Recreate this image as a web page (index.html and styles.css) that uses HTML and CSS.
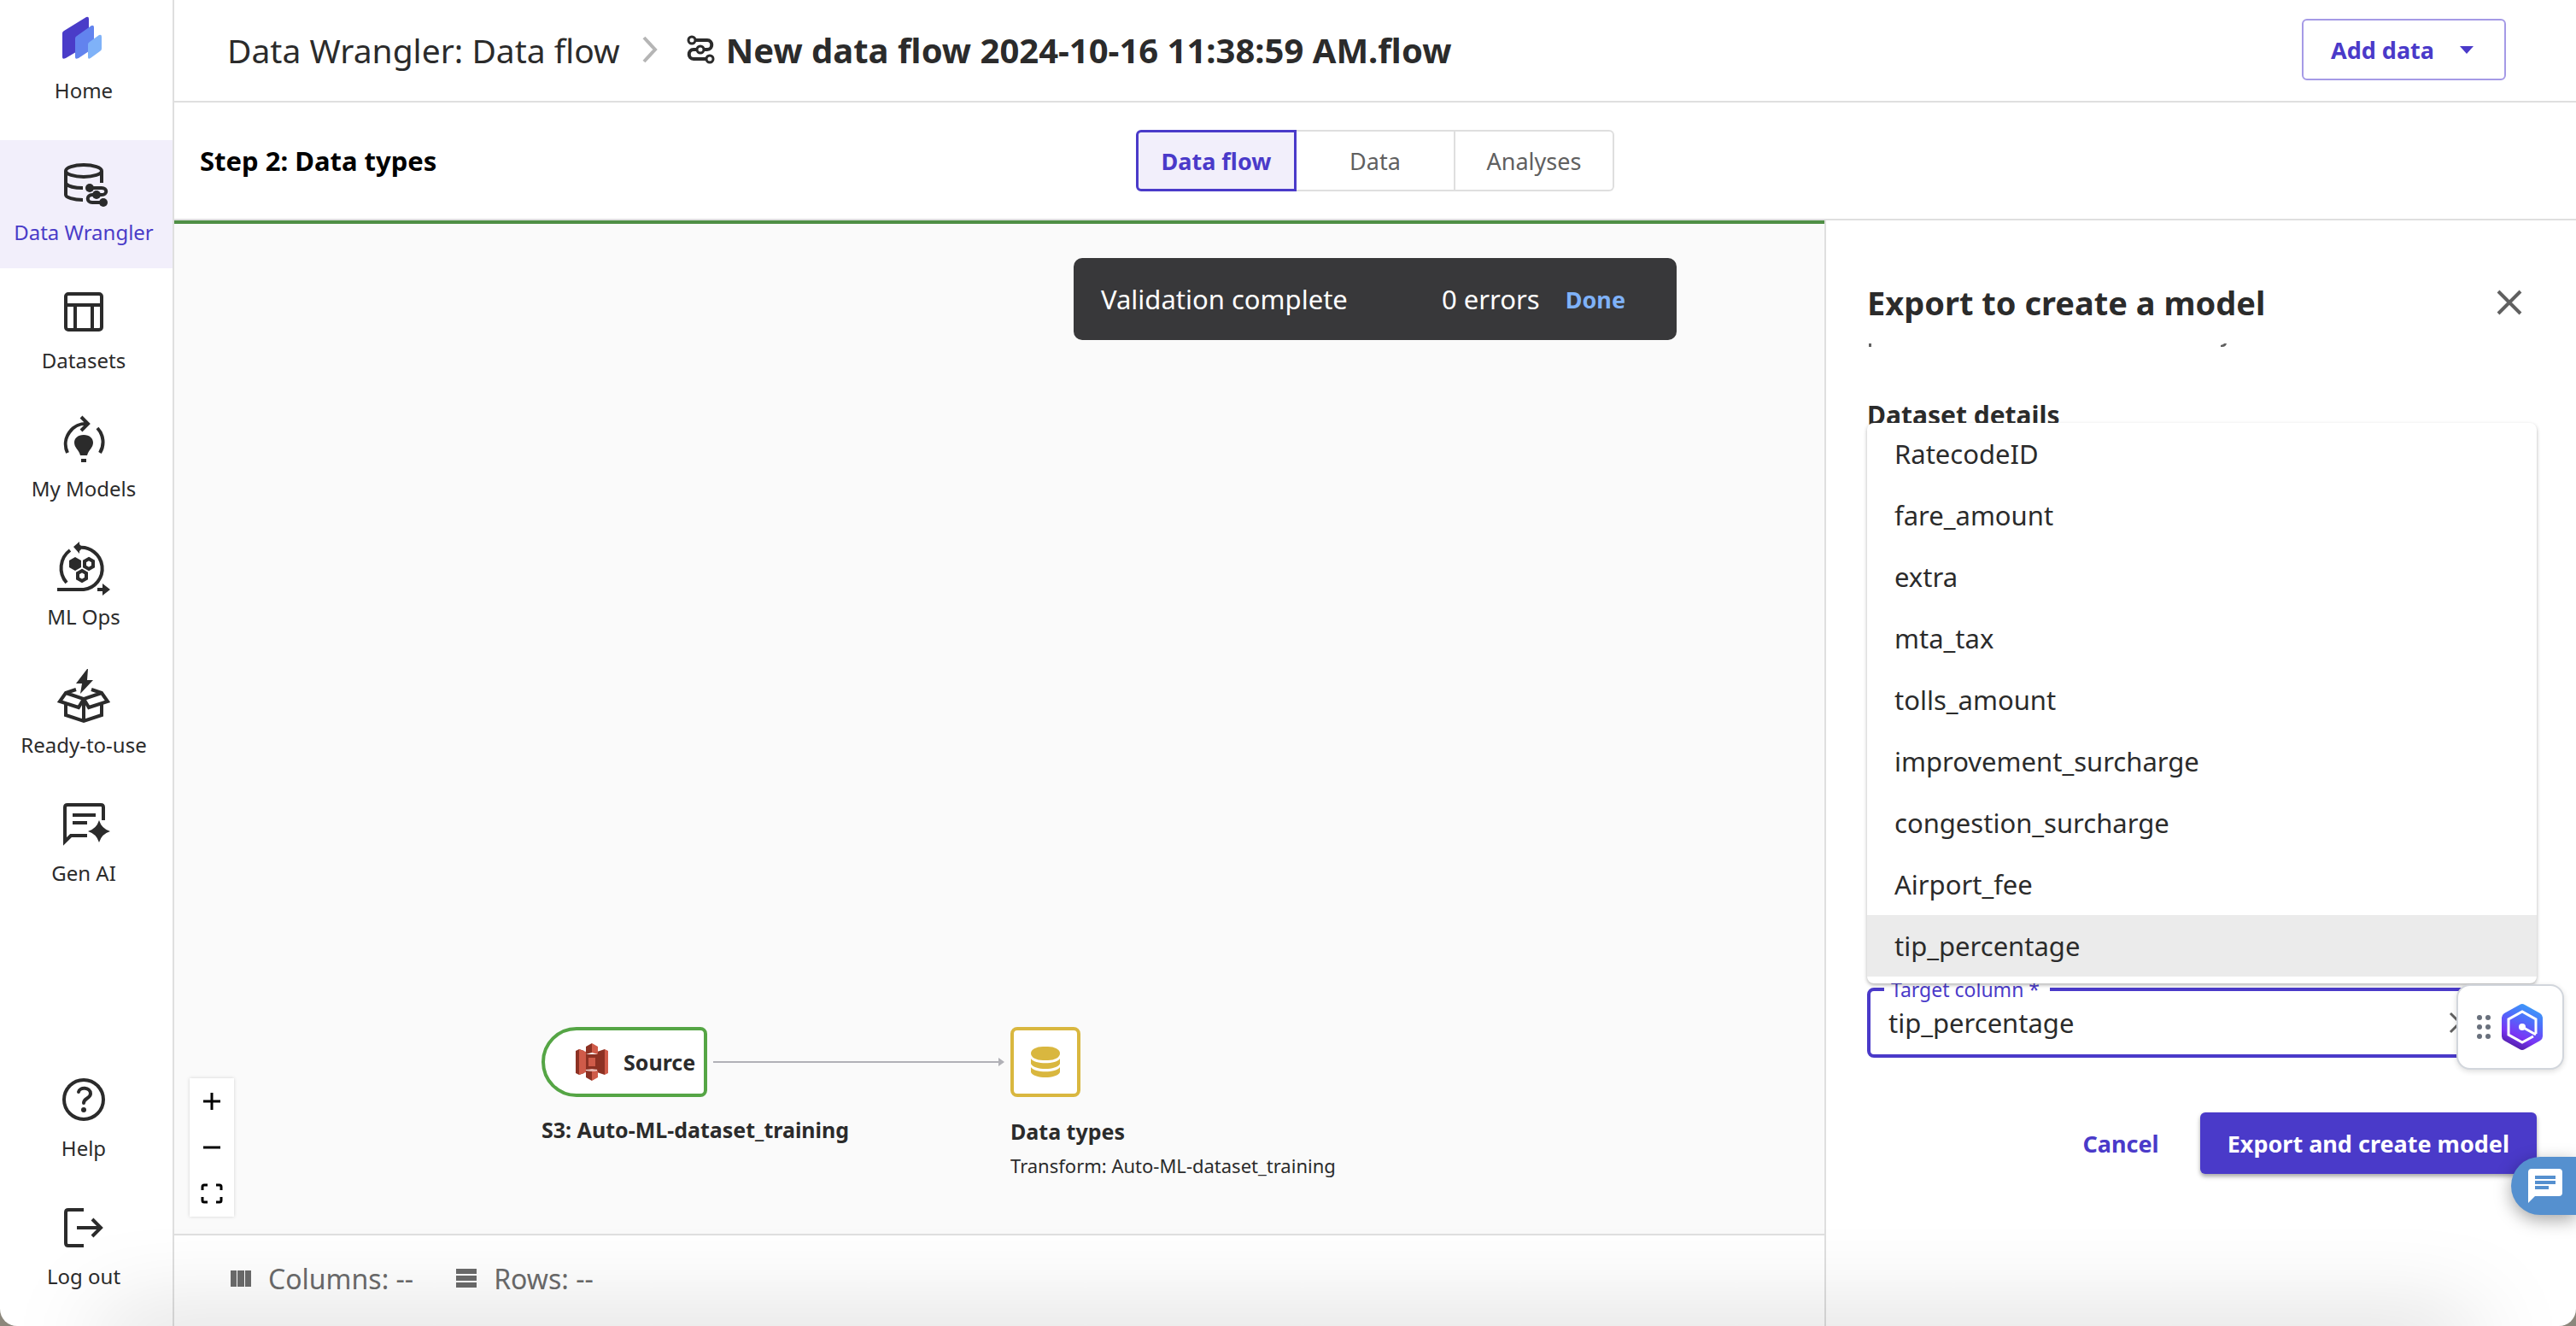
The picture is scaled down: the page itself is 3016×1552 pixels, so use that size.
FILE: index.html
```html
<!DOCTYPE html>
<html lang="en">
<head>
<meta charset="utf-8">
<title>Data Wrangler</title>
<link rel="stylesheet" href="styles.css">
</head>
<body>
<div class="app">
  <nav class="sidebar" aria-label="Main">
    <a class="nav-item nav-home" href="#home">
      <svg class="nav-icon" viewBox="0 0 60 60"><path fill="#4a3cc8" d="M5 29Q5 27 7 26L33 10Q36 9 36 12V42L9 58Q5 60 5 57Z"/><path fill="#6283ee" d="M20 35Q20 33 22 32L39 20Q42 19 42 22V46L24 58Q20 60 20 57Z"/><path fill="#7fb2f8" d="M35 42Q35 40 37 39L48 31Q51 30 51 33V47Q51 49 49 50L38 58Q35 60 35 57Z"/></svg>
      <span>Home</span>
    </a>
    <a class="nav-item nav-active" href="#wrangler" aria-current="page">
      <svg class="nav-icon" viewBox="0 0 60 60"><g fill="none" stroke="#2b2b2b" stroke-width="4"><ellipse cx="30" cy="14" rx="21" ry="7"/><path d="M9 14V42c0 3 9 6 20 6M9 29c3 3 10 5 20 5M51 14v14"/><path d="M37 34H51c7 0 7 8 0 8H40c-7 0-7 9 0 9H53"/></g><g fill="#2b2b2b"><circle cx="37" cy="34" r="5"/><circle cx="45" cy="42" r="5"/><circle cx="53" cy="51" r="5"/></g></svg>
      <span>Data Wrangler</span>
    </a>
    <a class="nav-item" href="#datasets">
      <svg class="nav-icon" viewBox="0 0 60 60"><g fill="none" stroke="#2b2b2b" stroke-width="4"><rect x="9" y="8" width="42" height="42" rx="3"/><path d="M9 21H51M20 21V50M40 21V50"/></g></svg>
      <span>Datasets</span>
    </a>
    <a class="nav-item" href="#models">
      <svg class="nav-icon" viewBox="0 0 60 60"><g fill="none" stroke="#2b2b2b" stroke-width="4"><path d="M11 44A24 24 0 0 1 35 10M27 2l8 8-8 8M46 15a24 24 0 0 1 3 29"/></g><path fill="#2b2b2b" d="M30 23c7 0 11 4 11 9 0 6-5 8-7 15h-8c-2-7-7-9-7-15 0-5 4-9 11-9zM27 51h6v4h-6z"/></svg>
      <span>My Models</span>
    </a>
    <a class="nav-item" href="#mlops">
      <svg class="nav-icon" viewBox="0 0 60 60"><g fill="none" stroke="#2b2b2b" stroke-width="4"><path d="M10 46A26 26 0 0 1 14 8M24 5a24 24 0 0 1 6 49H-1M46 54h8"/></g><g fill="#2b2b2b"><path d="M18 4l7-6v3l2 2v4l-2 2v3zM52 47l9 7-9 7zM20 16l7 4v8l-7 4-7-4v-8z"/></g><g fill="none" stroke="#2b2b2b" stroke-width="4"><path d="M36 18l5 3v6l-5 3-5-3v-6zM28 32l5 3v6l-5 3-5-3v-6z"/></g></svg>
      <span>ML Ops</span>
    </a>
    <a class="nav-item" href="#ready">
      <svg class="nav-icon" viewBox="0 0 60 60"><path fill="#2b2b2b" d="M34-3L21 14h7l-2 12L41 10h-7l1-13z"/><g fill="none" stroke="#2b2b2b" stroke-width="4"><path d="M21 21L9 25 2 35l22 7 6-10L9 25M39 21l12 4 7 10-22 7-6-10 21-7M9 37v14l21 7 21-7V37M30 32v26"/></g></svg>
      <span>Ready-to-use</span>
    </a>
    <a class="nav-item" href="#genai">
      <svg class="nav-icon" viewBox="0 0 60 60"><path fill="none" stroke="#2b2b2b" stroke-width="4" d="M53 24V9q0-3-3-3H11q-3 0-3 3v40l7-7H34M17 18H44M17 27H34"/><path fill="#2b2b2b" d="M48 24q3 10 13 13-10 3-13 13-3-10-13-13 10-3 13-13z"/></svg>
      <span>Gen AI</span>
    </a>
    <div class="nav-spacer"></div>
    <a class="nav-item" href="#help">
      <svg class="nav-icon" viewBox="0 0 60 60"><circle cx="30" cy="29" r="23" fill="none" stroke="#2b2b2b" stroke-width="4"/><path fill="none" stroke="#2b2b2b" stroke-width="4" stroke-linecap="round" d="M24 20c1-6 14-6 14 2 0 6-8 5-8 11"/><circle cx="30" cy="41" r="3" fill="#2b2b2b"/></svg>
      <span>Help</span>
    </a>
    <a class="nav-item" href="#logout">
      <svg class="nav-icon" viewBox="0 0 60 60"><path fill="none" stroke="#2b2b2b" stroke-width="4" d="M30 8H12q-3 0-3 3V47q0 3 3 3H30M22 29H50M40 19l10 10-10 10"/></svg>
      <span>Log out</span>
    </a>
  </nav>

  <div class="page">
    <header class="topbar">
      <a class="crumb" href="#flows">Data Wrangler: Data flow</a>
      <svg class="crumb-sep" viewBox="0 0 20 32"><path fill="none" stroke="#b5b5b5" stroke-width="4" d="M2 2l13 14L2 30"/></svg>
      <svg class="flow-icon" viewBox="0 0 32 34"><path fill="none" stroke="#2b2b2b" stroke-width="4" d="M8 6H24c7 0 7 11 0 11H8c-7 0-7 11 0 11H25"/><g fill="#fff" stroke="#2b2b2b" stroke-width="3"><circle cx="6" cy="6" r="4"/><circle cx="16" cy="17" r="4"/><circle cx="27" cy="28" r="4"/></g></svg>
      <h1 class="flow-name">New data flow 2024-10-16 11:38:59 AM.flow</h1>
      <button class="btn btn-outline" type="button">Add data <span class="caret"></span></button>
    </header>

    <div class="stepbar">
      <h2 class="step-title">Step 2: Data types</h2>
      <div class="tabs" role="tablist">
        <button class="tab tab-active" type="button" role="tab" aria-selected="true">Data flow</button>
        <button class="tab" type="button" role="tab" aria-selected="false">Data</button>
        <button class="tab" type="button" role="tab" aria-selected="false">Analyses</button>
      </div>
    </div>

    <div class="work">
      <main class="flow">
        <div class="canvas">
          <div class="toast" role="status">
            <span class="toast-text">Validation complete</span>
            <span>0 errors</span>
            <button class="toast-done" type="button">Done</button>
          </div>

          <div class="node node-source">
            <div class="source-box">
              <svg class="s3-icon" viewBox="0 0 38 44"><path fill="#8c3123" d="M0 9l4-2 6 2v26l-6 2-4-2z"/><path fill="#cf5b49" d="M4 7l8 3v24l-8 3z"/><path fill="#8c3123" d="M12 13h14v18H12z"/><path fill="#8c3123" d="M34 7l-9 3v24l9 3z"/><path fill="#cf5b49" d="M34 7l4 2v26l-4 2z"/><path fill="#8c3123" d="M19 0l-7 4v9l7-2z"/><path fill="#cf5b49" d="M19 0l7 4v9l-7-2zM15 17h8v10h-8z"/><path fill="#e8b3ab" d="M12 31l7-1 7 1-7 2z"/><path fill="#8c3123" d="M12 32l7 1v11l-7-4z"/><path fill="#cf5b49" d="M26 32l-7 1v11l7-4z"/></svg>
              <span>Source</span>
            </div>
            <div class="node-name">S3: Auto-ML-dataset_training</div>
          </div>
          <svg class="edge" viewBox="0 0 342 20"><path stroke="#b1b1b7" stroke-width="2" d="M0 10H336"/><path fill="#b1b1b7" d="M334 5l7 5-7 5z"/></svg>
          <div class="node node-types">
            <div class="types-box">
              <svg class="types-icon" viewBox="0 0 34 36"><g fill="#d9b73f"><rect y="0" width="34" height="16" rx="14" ry="8"/><path d="M0 14c4 7 30 7 34 0v6c-4 8-30 8-34 0zM0 24c4 7 30 7 34 0v6c-4 8-30 8-34 0z"/></g></svg>
            </div>
            <div class="node-name">Data types</div>
            <div class="node-sub">Transform: Auto-ML-dataset_training</div>
          </div>

          <div class="zoomer">
            <button type="button" aria-label="Zoom in"><svg viewBox="0 0 26 26"><path stroke="#000" stroke-width="3" d="M3 13H23M13 3V23"/></svg></button>
            <button type="button" aria-label="Zoom out"><svg viewBox="0 0 26 26"><path stroke="#000" stroke-width="3" d="M3 13H23"/></svg></button>
            <button type="button" aria-label="Fit view"><svg viewBox="0 0 26 26"><path fill="none" stroke="#000" stroke-width="3" d="M2 9V5q0-2 2-2H8M18 3h4q2 0 2 2V9M24 17v4q0 2-2 2H18M8 23H4q-2 0-2-2V17"/></svg></button>
          </div>
        </div>
        <footer class="stats">
          <svg class="stat-icon" viewBox="0 0 24 24"><path fill="#6b6b6b" d="M0 3h7v19H0zM8 3h8v19H8zM17 3h7v19h-7z"/></svg>
          <span class="stat">Columns: --</span>
          <svg class="stat-icon" viewBox="0 0 24 24"><path fill="#6b6b6b" d="M0 1h24v6H0zM0 9h24v6H0zM0 17h24v6H0z"/></svg>
          <span class="stat">Rows: --</span>
        </footer>
      </main>

      <aside class="panel">
        <div class="panel-head">
          <h2 class="panel-title">Export to create a model</h2>
          <button class="icon-btn" type="button" aria-label="Close"><svg viewBox="0 0 28 28"><path stroke="#606060" stroke-width="4" d="M1 1L27 27M27 1L1 27"/></svg></button>
        </div>
        <svg class="scrolled-edge" viewBox="0 0 420 4" aria-hidden="true"><path fill="#606060" d="M0 0h3v4H0zM412 2l3-1 1-1h3q-1 4-5 4h-2z"/></svg>
        <h3 class="section-title">Dataset details</h3>
        <div class="combo">
          <ul class="options" role="listbox" id="columns">
            <li role="option">RatecodeID</li>
            <li role="option">fare_amount</li>
            <li role="option">extra</li>
            <li role="option">mta_tax</li>
            <li role="option">tolls_amount</li>
            <li role="option">improvement_surcharge</li>
            <li role="option">congestion_surcharge</li>
            <li role="option">Airport_fee</li>
            <li class="picked" role="option" aria-selected="true">tip_percentage</li>
          </ul>
          <div class="field">
            <label class="field-label" for="target">Target column *</label>
            <input class="field-input" id="target" type="text" role="combobox" aria-controls="columns" aria-expanded="true" value="tip_percentage">
            <button class="clear" type="button" aria-label="Clear"><svg viewBox="0 0 28 28"><path stroke="#606060" stroke-width="3" d="M3 3L25 25M25 3L3 25"/></svg></button>
          </div>
          <button class="widget" type="button" aria-label="Assistant">
            <svg class="grip" viewBox="0 0 18 30"><g fill="#69707c"><circle cx="4" cy="4" r="3"/><circle cx="14" cy="4" r="3"/><circle cx="4" cy="15" r="3"/><circle cx="14" cy="15" r="3"/><circle cx="4" cy="26" r="3"/><circle cx="14" cy="26" r="3"/></g></svg>
            <svg class="hex" viewBox="0 0 48 54"><defs><linearGradient id="hexfill" x1="0.3" y1="1" x2="0.7" y2="0"><stop offset="0" stop-color="#4a1b9c"/><stop offset="0.3" stop-color="#7a35f5"/><stop offset="0.65" stop-color="#4f6cfb"/><stop offset="1" stop-color="#3aa0f8"/></linearGradient></defs><path fill="url(#hexfill)" d="M21 1q3-2 6 0l18 10q3 2 3 5v22q0 3-3 5L27 53q-3 2-6 0L3 43q-3-2-3-5V16q0-3 3-5z"/><path fill="none" stroke="#fff" stroke-width="3" d="M40 35V18L24 9 8 18v18l16 9 13-7M24 27l16 9"/><circle cx="24" cy="27" r="4" fill="#fff"/></svg>
          </button>
        </div>
        <div class="actions">
          <button class="btn btn-text" type="button">Cancel</button>
          <button class="btn btn-primary" type="button">Export and create model</button>
        </div>
        <button class="chat" type="button" aria-label="Chat"><svg viewBox="0 0 40 40"><path fill="#fff" d="M4 0h32q4 0 4 4v24q0 4-4 4H8l-8 8V4q0-4 4-4z"/><path fill="#5590cf" d="M8 8h24v4H8zM8 14h24v4H8zM8 20h16v4H8z"/></svg></button>
      </aside>
    </div>
  </div>
  <div class="bottom-shade"></div>
</div>
</body>
</html>
```
FILE: styles.css
```css
* { box-sizing: border-box; }
body {
  margin: 0;
  background: #8c877c;
  color: #2b2b2b;
  font-family: "Noto Sans", "Open Sans", sans-serif;
  font-size: 31px;
}
button, input { font: inherit; color: inherit; margin: 0; padding: 0; border: 0; background: none; }
h1, h2, h3, ul { margin: 0; padding: 0; font-size: inherit; }
a { color: inherit; text-decoration: none; }
svg { display: block; flex: none; overflow: visible; }

.app {
  position: relative;
  display: flex;
  min-height: 100vh;
  background: #fff;
  border-radius: 0 0 20px 20px;
  overflow: hidden;
}

/* Sidebar */
.sidebar {
  flex: none;
  width: 204px;
  display: flex;
  flex-direction: column;
  padding-bottom: 16px;
  border-right: 2px solid #dfdfdf;
}
.nav-item {
  display: flex;
  flex-direction: column;
  align-items: center;
  gap: 10px;
  height: 150px;
  padding: 22px 6px 0 0;
  font-size: 24px;
  line-height: 32px;
  white-space: nowrap;
}
.nav-home { height: 164px; padding-top: 10px; gap: 20px; }
.nav-active { background: #f2effb; }
.nav-active span { color: #4a3cc8; }
.nav-icon { width: 60px; height: 60px; }
.nav-spacer { flex: 1; }

.page { flex: 1; min-width: 0; display: flex; flex-direction: column; }

/* Header */
.topbar {
  display: flex;
  align-items: center;
  height: 120px;
  padding: 0 82px 2px 62px;
  border-bottom: 2px solid #dfdfdf;
  white-space: nowrap;
}
.crumb { font-size: 39px; }
.crumb-sep { width: 20px; height: 32px; margin: 0 32px 0 26px; }
.flow-icon { width: 32px; height: 34px; margin-right: 14px; }
.flow-name { font-size: 40px; font-weight: 700; }
.btn {
  height: 72px;
  padding: 0 32px;
  border-radius: 6px;
  font-size: 27px;
  font-weight: 700;
  color: #4a3ac9;
  white-space: nowrap;
}
.btn-outline {
  display: flex;
  align-items: center;
  gap: 30px;
  margin-left: auto;
  padding-right: 36px;
  border: 2px solid #a59ae6;
}
.caret { border: 8px solid transparent; border-top: 9px solid #4a3ac9; border-bottom: 0; }

.stepbar {
  display: grid;
  grid-template-columns: 1fr auto 1fr;
  align-items: center;
  height: 138px;
  padding: 0 30px;
  border-bottom: 2px solid #dfdfdf;
}
.step-title { font-size: 31px; color: #000; }
.tabs { display: flex; }
.tab {
  width: 186px;
  height: 72px;
  border: 2px solid #dfdfdf;
  border-left-width: 0;
  font-size: 27px;
  color: #606060;
}
.tab:last-child { border-radius: 0 6px 6px 0; }
.tab-active {
  width: 188px;
  border: 3px solid #4a3ac9;
  border-radius: 6px 0 0 6px;
  background: #f2effb;
  color: #4a3ac9;
  font-weight: 700;
}

/* Canvas */
.work { flex: 1; display: flex; }
.flow { flex: 1; min-width: 0; display: flex; flex-direction: column; }
.canvas {
  position: relative;
  flex: 1;
  border-top: 4px solid #4f8f45;
  background: #fafafa;
}
.toast {
  position: absolute;
  top: 40px;
  right: 173px;
  width: 706px;
  height: 96px;
  display: flex;
  align-items: center;
  padding: 0 60px 0 32px;
  border-radius: 10px;
  background: #38383a;
  color: #fff;
}
.toast-text { flex: 1; }
.toast-done { margin-left: 30px; color: #7fb2f8; font-size: 27px; font-weight: 700; }
.node { position: absolute; white-space: nowrap; bottom: 60px; height: 182px; }
.node-source { left: 430px; }
.node-types { left: 979px; }
.edge { position: absolute; left: 631px; bottom: 191px; width: 342px; height: 20px; }
.source-box {
  display: flex;
  align-items: center;
  gap: 18px;
  width: 194px;
  height: 82px;
  padding-left: 36px;
  margin-bottom: 18px;
  border: 4px solid #55a545;
  border-radius: 41px 8px 8px 41px;
  background: #fff;
  font-size: 25px;
  font-weight: 700;
}
.s3-icon { width: 38px; height: 44px; }
.types-box {
  display: flex;
  align-items: center;
  justify-content: center;
  width: 82px;
  height: 82px;
  margin-bottom: 20px;
  border: 4px solid #d9b73f;
  border-radius: 8px;
  background: #fff;
}
.types-icon { width: 34px; height: 36px; }
.node-name { font-size: 25px; line-height: 40px; font-weight: 700; }
.node-sub { font-size: 22px; line-height: 40px; }
.zoomer {
  position: absolute;
  left: 18px;
  bottom: 20px;
  display: flex;
  flex-direction: column;
  background: #fff;
  box-shadow: 0 0 4px rgba(0, 0, 0, 0.16);
}
.zoomer button { width: 52px; height: 54px; padding: 0 13px; }
.zoomer svg { width: 26px; height: 26px; }

.stats {
  display: flex;
  align-items: center;
  height: 108px;
  padding: 0 66px 6px;
  border-top: 2px solid #dfdfdf;
  color: #6b6b6b;
  font-size: 32px;
}
.stat-icon { width: 24px; height: 24px; margin-right: 20px; }
.stat { margin-right: 50px; }

/* Export panel */
.panel {
  position: relative;
  flex: none;
  width: 880px;
  display: flex;
  flex-direction: column;
  padding: 64px 46px 0 48px;
  border-left: 2px solid #dfdfdf;
}
.panel-head { display: flex; justify-content: space-between; align-items: center; height: 64px; padding-right: 18px; }
.panel-title { font-size: 38px; }
.icon-btn svg { width: 28px; height: 28px; }
.scrolled-edge { width: 420px; height: 4px; margin: 16px 0 0 2px; }
.section-title { margin-top: 58px; font-size: 30px; line-height: 44px; }
.combo { position: relative; padding-top: 648px; }
.options {
  position: absolute;
  left: 0;
  right: 0;
  bottom: 87px;
  z-index: 1;
  list-style: none;
  padding-bottom: 8px;
  border-radius: 8px;
  background: #fff;
  box-shadow: 0 2px 4px rgba(0, 0, 0, 0.3);
  overflow: hidden;
}
.options li { height: 72px; padding-left: 32px; line-height: 72px; }
.options .picked { background: #ebebeb; }
.field {
  position: relative;
  display: flex;
  align-items: center;
  height: 82px;
  padding: 0 72px 0 21px;
  border: 4px solid #4a3ac9;
  border-radius: 8px;
}
.field-label {
  position: absolute;
  left: 16px;
  top: -18px;
  padding: 0 12px 0 8px;
  background: #fff;
  color: #4a3ac9;
  font-size: 23px;
  line-height: 32px;
}
.field-input { flex: 1; min-width: 0; outline: 0; }
.clear { width: 28px; height: 28px; }
.widget {
  position: absolute;
  right: -32px;
  bottom: -14px;
  z-index: 2;
  display: flex;
  align-items: center;
  justify-content: center;
  gap: 12px;
  width: 126px;
  height: 100px;
  padding-right: 3px;
  border: 2px solid #d2d6dc;
  border-radius: 16px;
  background: #fff;
  box-shadow: 0 2px 6px rgba(0, 0, 0, 0.14);
}
.clear svg { width: 28px; height: 28px; }
.grip { width: 18px; height: 30px; }
.hex { width: 48px; height: 54px; }
.actions { display: flex; justify-content: flex-end; gap: 16px; margin-top: 64px; }
.btn-primary { background: #4a3ac9; color: #fff; box-shadow: 0 3px 5px rgba(0, 0, 0, 0.35); }
.chat {
  position: absolute;
  right: 0;
  bottom: 130px;
  width: 76px;
  height: 68px;
  padding-left: 20px;
  border-radius: 34px 0 0 34px;
  background: #5590cf;
  box-shadow: 0 6px 20px rgba(0, 0, 0, 0.35);
}
.chat svg { width: 40px; height: 40px; }

.bottom-shade {
  position: absolute;
  left: 120px;
  right: 120px;
  top: 100%;
  height: 40px;
  box-shadow: 0 0 110px rgba(0, 0, 0, 0.26);
  pointer-events: none;
}
```
